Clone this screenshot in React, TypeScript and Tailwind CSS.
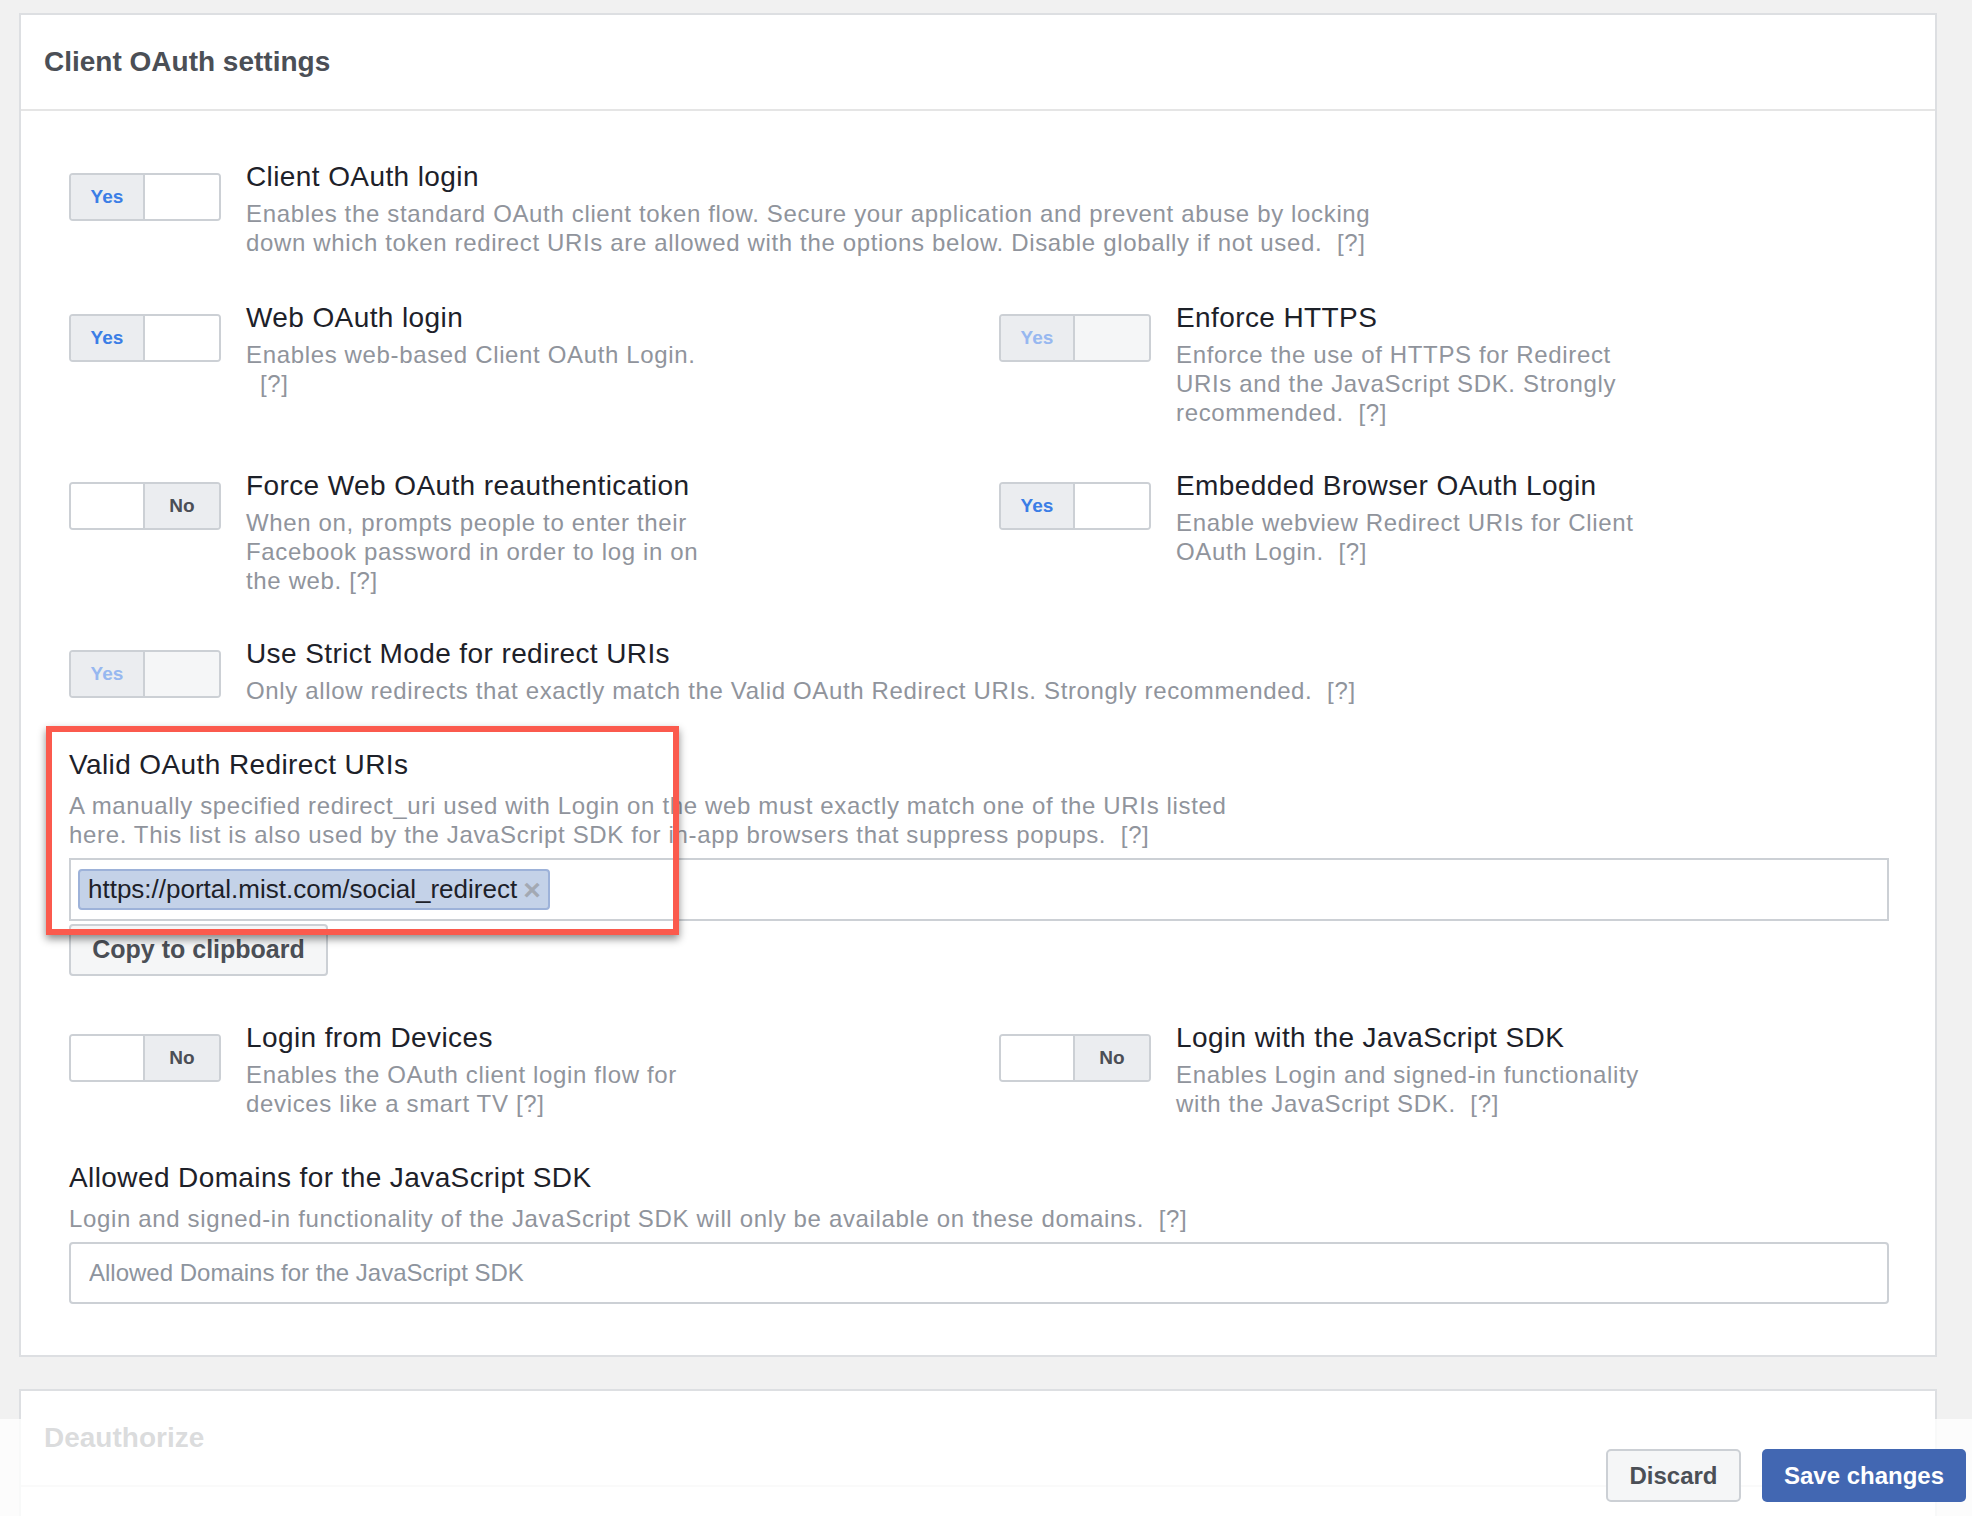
import type { ReactNode } from "react";

type ToggleState = "yes" | "no" | "yes-disabled";

const TITLE = "text-[28px] leading-[34px] tracking-[0.4px] text-[#1d2129]";
const DESC = "text-[24px] leading-[29px] tracking-[0.65px] text-[#90949c]";

export default function App() {
  return (
    <div className="relative h-[1516px] overflow-hidden bg-[#f1f1f1] pl-[19px] pr-[35px] pt-[13px] font-['Liberation_Sans',Arial,sans-serif]">
      <section className="border-2 border-[#dddfe2] bg-white">
        <CardHeader title="Client OAuth settings" />

        <div className="flex flex-col pb-[51px] pl-[48px] pr-[46px] pt-[49px]">
          <SettingRow
            toggle="yes"
            title="Client OAuth login"
            description={
              <>
                Enables the standard OAuth client token flow. Secure your application and prevent abuse by locking
                <br />
                down which token redirect URIs are allowed with the options below. Disable globally if not used.
                {"\u00a0 [?]"}
              </>
            }
          />

          <div className="mt-[44px] grid grid-cols-[930px_1fr]">
            <SettingRow
              toggle="yes"
              title="Web OAuth login"
              description={
                <>
                  Enables web-based Client OAuth Login.
                  <br />
                  <span className="pl-[14px]">[?]</span>
                </>
              }
            />
            <SettingRow
              toggle="yes-disabled"
              title="Enforce HTTPS"
              description={
                <>
                  Enforce the use of HTTPS for Redirect
                  <br />
                  URIs and the JavaScript SDK. Strongly
                  <br />
                  recommended.{"\u00a0 [?]"}
                </>
              }
            />
          </div>

          <div className="mt-[42px] grid grid-cols-[930px_1fr]">
            <SettingRow
              toggle="no"
              title="Force Web OAuth reauthentication"
              description={
                <>
                  When on, prompts people to enter their
                  <br />
                  Facebook password in order to log in on
                  <br />
                  the web. [?]
                </>
              }
            />
            <SettingRow
              toggle="yes"
              title="Embedded Browser OAuth Login"
              description={
                <>
                  Enable webview Redirect URIs for Client
                  <br />
                  OAuth Login.{"\u00a0 [?]"}
                </>
              }
            />
          </div>

          <div className="mt-[42px]">
            <SettingRow
              toggle="yes-disabled"
              title="Use Strict Mode for redirect URIs"
              description={
                <>
                  Only allow redirects that exactly match the Valid OAuth Redirect URIs. Strongly recommended.
                  {"\u00a0 [?]"}
                </>
              }
            />
          </div>

          <div className="mt-[43px]">
            <h3 className={TITLE}>Valid OAuth Redirect URIs</h3>
            <p className={`mt-[9px] ${DESC}`}>
              A manually specified redirect_uri used with Login on the web must exactly match one of the URIs listed
              <br />
              here. This list is also used by the JavaScript SDK for in-app browsers that suppress popups.
              {"\u00a0 [?]"}
            </p>
            <div className="mt-[9px] flex h-[63px] items-start border-2 border-[#ccd0d5] bg-white pl-[7px] pt-[9px]">
              <span className="flex h-[41px] items-center gap-[6px] rounded-[4px] border-2 border-[#9db2d9] bg-[#c4d2e8] pl-[8px] pr-[7px] text-[26px] text-[#1d2129]">
                https://portal.mist.com/social_redirect
                <span className="text-[30px] font-bold leading-none text-[#a3a9b3]">×</span>
              </span>
            </div>
            <button
              type="button"
              className="mt-[3px] flex h-[52px] w-[259px] items-center justify-center rounded-[4px] border-2 border-[#ccd0d5] bg-[#f5f6f7] text-[25px] font-bold text-[#4b4f56]"
            >
              Copy to clipboard
            </button>
          </div>

          <div className="mt-[45px] grid grid-cols-[930px_1fr]">
            <SettingRow
              toggle="no"
              title="Login from Devices"
              description={
                <>
                  Enables the OAuth client login flow for
                  <br />
                  devices like a smart TV [?]
                </>
              }
            />
            <SettingRow
              toggle="no"
              title="Login with the JavaScript SDK"
              description={
                <>
                  Enables Login and signed-in functionality
                  <br />
                  with the JavaScript SDK.{"\u00a0 [?]"}
                </>
              }
            />
          </div>

          <div className="mt-[43px]">
            <h3 className={`${TITLE} tracking-[0.3px]`}>Allowed Domains for the JavaScript SDK</h3>
            <p className={`mt-[9px] ${DESC}`}>
              Login and signed-in functionality of the JavaScript SDK will only be available on these domains.
              {"\u00a0 [?]"}
            </p>
            <input
              type="text"
              placeholder="Allowed Domains for the JavaScript SDK"
              className="mt-[9px] block h-[62px] w-full rounded-[4px] border-2 border-[#ccd0d5] bg-white px-[18px] text-[24px] text-[#1d2129] outline-none placeholder:text-[#8d949e]"
            />
          </div>
        </div>
      </section>

      <section className="mt-[32px] border-2 border-[#dddfe2] bg-white">
        <CardHeader title="Deauthorize" />
        <div className="h-[200px]" />
      </section>

      {/* annotation box drawn over the redirect URI field */}
      <div className="pointer-events-none absolute left-[46px] top-[726px] h-[209px] w-[633px] border-[6px] border-[#fb5a4d] shadow-[0_4px_8px_rgba(0,0,0,0.45)]" />

      <footer className="absolute inset-x-0 bottom-0 flex h-[97px] items-start justify-end gap-[21px] bg-white/80 pr-[6px] pt-[30px]">
        <button
          type="button"
          className="flex h-[53px] w-[135px] items-center justify-center rounded-[5px] border-2 border-[#ccd0d5] bg-[#f5f6f7] text-[24px] font-bold text-[#4b4f56]"
        >
          Discard
        </button>
        <button
          type="button"
          className="flex h-[53px] w-[204px] items-center justify-center rounded-[5px] bg-[#4267b2] text-[24px] font-bold text-white"
        >
          Save changes
        </button>
      </footer>
    </div>
  );
}

function CardHeader({ title }: { title: string }) {
  return (
    <div className="flex h-[96px] items-center border-b-2 border-[#e5e5e5] px-[23px]">
      <h2 className="text-[28px] font-bold text-[#4b4f56]">{title}</h2>
    </div>
  );
}

function SettingRow({
  toggle,
  title,
  description,
}: {
  toggle: ToggleState;
  title: string;
  description: ReactNode;
}) {
  return (
    <div className="flex items-start">
      <Toggle state={toggle} />
      <div className="ml-[25px]">
        <h3 className={TITLE}>{title}</h3>
        <p className={`mt-[5px] ${DESC}`}>{description}</p>
      </div>
    </div>
  );
}

function Toggle({ state }: { state: ToggleState }) {
  const isNo = state === "no";
  const isDisabled = state === "yes-disabled";

  return (
    <div className="mt-[13px] flex h-[48px] w-[152px] shrink-0 overflow-hidden rounded-[4px] border-2 border-[#ccd0d5] text-[19px] font-bold">
      <span
        className={`flex w-1/2 items-center justify-center border-r-2 border-[#ccd0d5] ${
          isNo ? "bg-white" : "bg-[#ebedf0]"
        } ${isDisabled ? "text-[#97b8f0]" : "text-[#3b7ee6]"}`}
      >
        {isNo ? "" : "Yes"}
      </span>
      <span
        className={`flex w-1/2 items-center justify-center ${
          isNo ? "bg-[#ebedf0] text-[#4b4f56]" : isDisabled ? "bg-[#f5f6f7]" : "bg-white"
        }`}
      >
        {isNo ? "No" : ""}
      </span>
    </div>
  );
}
